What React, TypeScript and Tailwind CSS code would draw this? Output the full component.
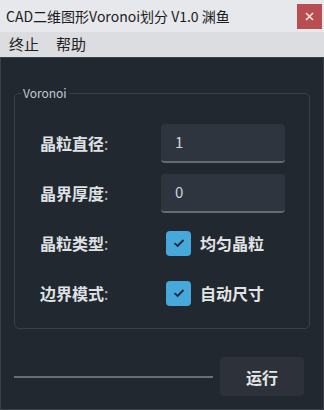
import React from 'react';

const font = { fontFamily: '"Noto Sans CJK SC", "Noto Sans", sans-serif' };

const Check: React.FC<{ label: string }> = ({ label }) => (
  <div className="flex items-center">
    <div className="w-[25px] h-[25px] ml-[5px] rounded-[4px] bg-[#47a8dc] flex items-center justify-center">
      <svg width="12" height="10" viewBox="0 0 12 10">
        <path d="M1.5 5.2 L4.6 8 L10.5 2" fill="none" stroke="#1d2834" strokeWidth="1.8" />
      </svg>
    </div>
    <span className="ml-[9px] text-[16px] font-bold text-[#e2e4e6]">{label}</span>
  </div>
);

const Field: React.FC<{ value: string }> = ({ value }) => (
  <div className="w-[124px] h-[39px] rounded-[4px] bg-[#2f353e] border-b-2 border-[#676b71] flex items-center pl-[14px] text-[15px] text-[#cdd6de]">
    {value}
  </div>
);

const Row: React.FC<{ label: string; children: React.ReactNode }> = ({ label, children }) => (
  <div className="flex items-center h-[40px]">
    <div className="w-[121px] text-[16px] text-[#dfe1e4]">
      <span className="font-bold">{label}</span>
      <span className="text-[#b8bcc2]">:</span>
    </div>
    {children}
  </div>
);

export default function App() {
  return (
    <div className="w-[324px] h-[410px] flex flex-col overflow-hidden" style={font}>
      {/* title bar */}
      <div className="h-[32px] bg-[#e6e8ec] flex items-center justify-between">
        <span className="pl-[6px] text-[14px] text-[#1b1b1b]">CAD二维图形Voronoi划分 V1.0 渊鱼</span>
        <div className="w-[25px] h-[25px] mr-[2px] bg-[#b84e51] flex items-center justify-center">
          <svg width="9" height="9" viewBox="0 0 9 9">
            <path d="M1 1 L8 8 M8 1 L1 8" stroke="#f4e8e8" strokeWidth="1.6" />
          </svg>
        </div>
      </div>
      {/* menu bar */}
      <div className="h-[25px] bg-[#dcdde0] flex items-center gap-[17px] pl-[9px] text-[15px] text-[#222]">
        <span>终止</span>
        <span>帮助</span>
      </div>
      {/* body */}
      <div className="flex-1 bg-[#222830] border border-[#3b4048] px-[13px] flex flex-col">
        <fieldset className="mt-[27px] border border-[#3a4049] rounded-[5px] p-0 m-0">
          <legend className="ml-[6px] px-[2px] text-[12px] leading-[16px] text-[#c5cad1]">Voronoi</legend>
          <div className="pl-[25px] pt-[22px] pb-[15px] flex flex-col gap-[10px]">
            <Row label="晶粒直径">
              <Field value="1" />
            </Row>
            <Row label="晶界厚度">
              <Field value="0" />
            </Row>
            <Row label="晶粒类型">
              <Check label="均匀晶粒" />
            </Row>
            <Row label="边界模式">
              <Check label="自动尺寸" />
            </Row>
          </div>
        </fieldset>
        <div className="mt-auto mb-[13px] flex items-center gap-[7px] pr-[6px]">
          <div className="flex-1 h-[2px] bg-[#6a6d72]" />
          <button className="w-[84px] h-[39px] rounded-[4px] bg-[#2d323a] text-[16px] font-bold text-[#e4e6e8]">
            运行
          </button>
        </div>
      </div>
    </div>
  );
}
